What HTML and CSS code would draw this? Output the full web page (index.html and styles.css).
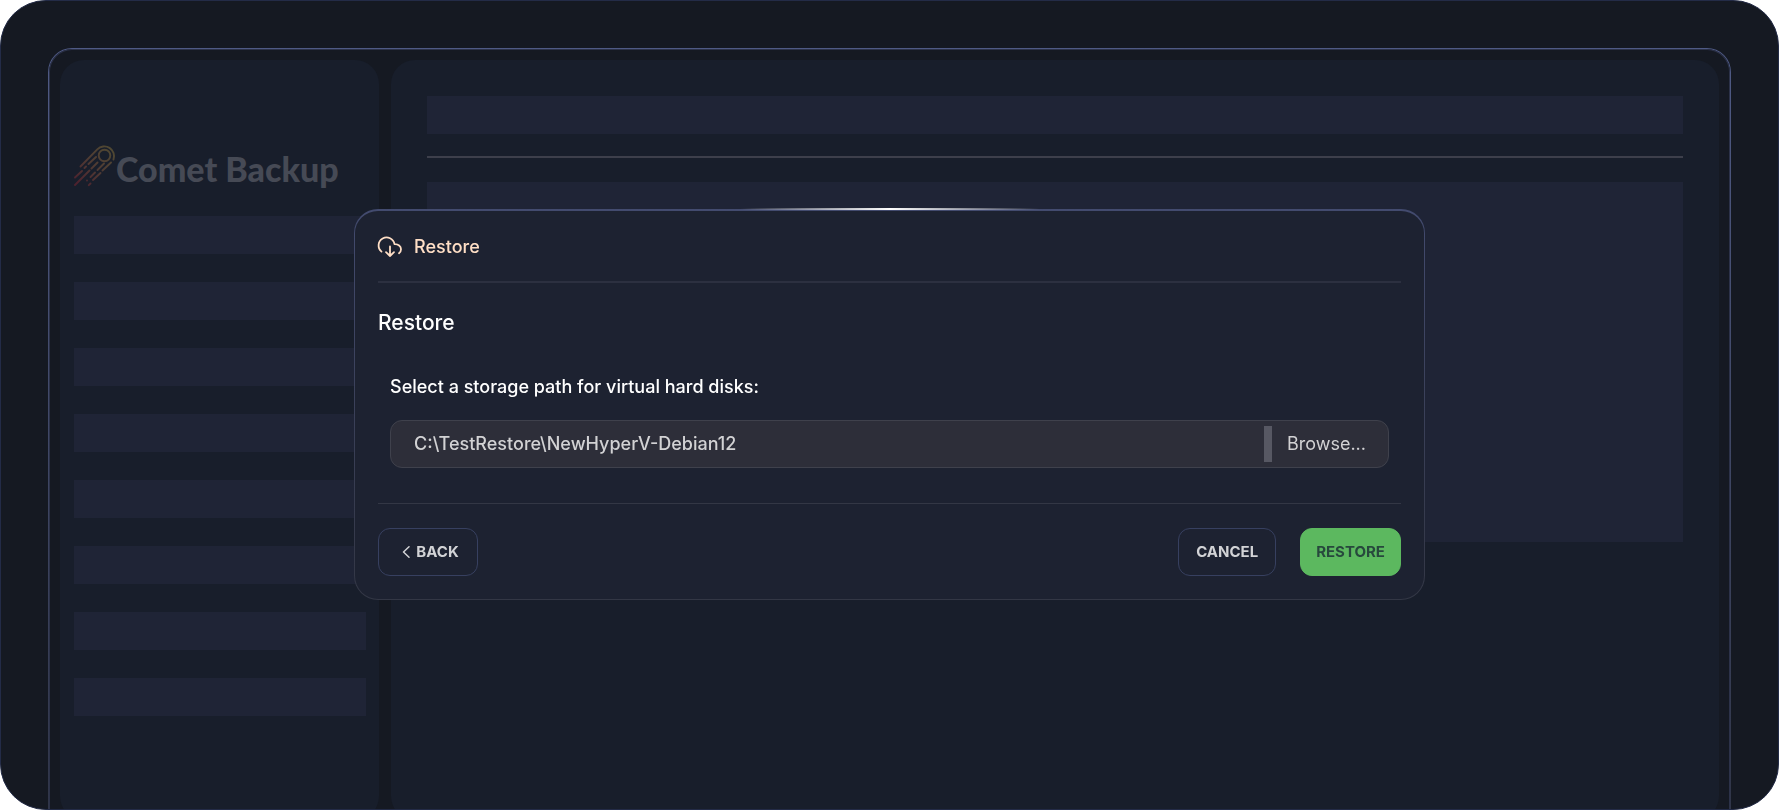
FILE: index.html
```html
<!DOCTYPE html>
<html lang="en">
<head>
<meta charset="utf-8">
<title>Comet Backup - Restore</title>
<link rel="stylesheet" href="styles.css">
</head>
<body>
<div class="stage">
  <div class="window">
    <aside class="panel sidebar">
      <div class="brand">
        <svg class="brand-mark" viewBox="0 0 42 44" fill="none" stroke="url(#comet)" stroke-width="1.9" stroke-linecap="round" aria-hidden="true">
          <defs>
            <linearGradient id="comet" gradientUnits="userSpaceOnUse" x1="36" y1="4" x2="4" y2="40">
              <stop offset="0" stop-color="#504832"/>
              <stop offset="0.5" stop-color="#4f3a33"/>
              <stop offset="1" stop-color="#4d222e"/>
            </linearGradient>
          </defs>
          <circle cx="30.500" cy="11.500" r="5.800"/>
          <path d="M6.500 22.500 23.300 5.300A9.800 9.800 0 0 1 39.500 15.500"/>
          <path d="M22 13 14.500 20M12 22.500 10.500 24M8 27 1 33.500"/>
          <path d="M23.500 18.500 17.500 24.500M15.500 26.500 1 41"/>
          <path d="M30 19.500 23.500 26M21 28.500 16.500 33M13 36.500 13 36.600"/>
          <path d="M37 18.500 28.500 26.500M26.500 29 19 36M16.500 39.500 14.800 41.200"/>
        </svg>
        <span class="brand-name">Comet Backup</span>
      </div>
      <div class="nav">
        <div class="bar"></div><div class="bar"></div><div class="bar"></div><div class="bar"></div>
        <div class="bar"></div><div class="bar"></div><div class="bar"></div><div class="bar"></div>
      </div>
    </aside>
    <main class="panel content">
      <div class="bar"></div>
      <hr class="content-rule">
      <div class="block"></div>
    </main>
  </div>
</div>
<div class="overlay">
  <form class="modal" role="dialog" aria-labelledby="dialog-title">
    <header class="modal-header">
      <svg class="cloud" viewBox="0 0 24 20" fill="none" stroke="currentColor" stroke-width="1.8" stroke-linecap="round" stroke-linejoin="round" aria-hidden="true">
        <path d="M3.500 14.600A8 8 0 1 1 16.500 7.200C20.200 7 23 9.300 23 12.300C23 14 22.300 15.400 21 16.300M12 9.500V19M8 15.200 12 19 16 15.200"/>
      </svg>
      <span id="dialog-title">Restore</span>
    </header>
    <section class="modal-body">
      <h1 class="heading">Restore</h1>
      <div class="field">
        <label class="label" for="path">Select a storage path for virtual hard disks:</label>
        <div class="path-box">
          <input class="path-input" id="path" type="text" value="C:\TestRestore\NewHyperV-Debian12">
          <button class="browse" type="button">Browse...</button>
        </div>
      </div>
    </section>
    <footer class="modal-footer">
      <button class="btn btn-back" type="button">
        <svg class="chevron" viewBox="0 0 8 12" fill="none" stroke="currentColor" stroke-width="1.5" stroke-linecap="round" stroke-linejoin="round" aria-hidden="true"><path d="M7 0.800 1.500 6 7 11.200"/></svg>
        BACK
      </button>
      <button class="btn btn-cancel" type="button">CANCEL</button>
      <button class="btn btn-primary" type="submit">RESTORE</button>
    </footer>
  </form>
</div>
</body>
</html>
```
FILE: styles.css
```css
* {
  box-sizing: border-box;
}

body {
  margin: 0;
  background: #fff;
  font-family: Inter, "Liberation Sans", sans-serif;
  color: #fff;
}

.stage {
  height: 100vh;
  padding: 47px 47px 0;
  border: 1px solid #232b47;
  border-radius: 46px;
  background: #151922;
  overflow: hidden;
}

.window {
  display: grid;
  grid-template-columns: minmax(0, 319px) minmax(0, 1fr);
  gap: 12px;
  height: calc(100% + 24px);
  padding: 11px 11px 12px;
  border: 1px solid transparent;
  border-radius: 24px 24px 0 0;
  background:
    linear-gradient(#151922, #151922) padding-box,
    linear-gradient(#4f5a85, #2f3446) border-box;
  box-shadow: inset 0 0 0 1px #2c3249;
}

.panel {
  border-radius: 24px;
  background: #181e2b;
}

.sidebar {
  padding: 84px 13px 0 14px;
}

.brand {
  display: flex;
  align-items: center;
  height: 44px;
  margin-bottom: 28px;
}

.brand-mark {
  flex: none;
  width: 42px;
  height: 44px;
}

.brand-name {
  padding-top: 5px;
  font-family: Lato, sans-serif;
  font-size: 34px;
  font-weight: 900;
  line-height: 40px;
  white-space: nowrap;
  color: #464a55;
}

.nav {
  display: grid;
  gap: 28px;
}

.bar {
  height: 38px;
  background: #1f2436;
}

.content {
  padding: 36px;
}

.content-rule {
  height: 2px;
  margin: 22px 0 24px;
  border: 0;
  background: #3d3f4b;
}

.block {
  height: 360px;
  background: #1f2436;
}

.overlay {
  position: fixed;
  inset: 0;
  display: flex;
  align-items: center;
  padding: 0 19.9% 2px;
}

.modal {
  position: relative;
  width: 100%;
  padding: 0 23px 23px;
  border: 1px solid transparent;
  border-top-width: 2px;
  border-radius: 24px;
  background:
    linear-gradient(#1d2231, #1d2231) padding-box,
    linear-gradient(#434b6f, #333745) border-box;
}

.modal::before {
  content: "";
  position: absolute;
  top: -3px;
  left: 50%;
  width: 300px;
  height: 2px;
  margin-left: -150px;
  background: linear-gradient(90deg, transparent, #fff, transparent);
}

.modal-header {
  display: flex;
  align-items: center;
  gap: 12px;
  height: 72px;
  padding-top: 2px;
  border-bottom: 2px solid #2c3040;
  font-size: 18px;
  font-weight: 500;
  line-height: 24px;
  color: #ffdfc6;
}

.cloud {
  width: 24px;
  height: 20px;
  overflow: visible;
}

.heading {
  margin: 0;
  padding: 26px 0;
  font-size: 21px;
  font-weight: 500;
  line-height: 28px;
}

.field {
  padding: 12px 12px 35px;
}

.label {
  display: block;
  margin-bottom: 21px;
  font-size: 18px;
  font-weight: 500;
  line-height: 24px;
}

.path-box {
  display: flex;
  align-items: center;
  height: 48px;
  border: 1px solid #3f414c;
  border-radius: 12px;
  background: #2d2e39;
}

.path-input {
  flex: 1;
  min-width: 0;
  height: 100%;
  padding: 0 23px;
  border: 0;
  outline: 0;
  background: none;
  font: inherit;
  font-size: 18px;
  font-weight: 500;
  color: #d2d2d4;
}

.browse {
  height: 36px;
  padding: 0 22px 0 15px;
  border: 0;
  border-left: 8px solid #575863;
  background: none;
  font: inherit;
  font-size: 18px;
  color: #d2d2d4;
}

.modal-footer {
  display: flex;
  gap: 24px;
  padding-top: 24px;
  border-top: 1px solid #333745;
}

.btn {
  display: flex;
  align-items: center;
  justify-content: center;
  gap: 6px;
  height: 48px;
  padding: 0 17px;
  border: 1px solid #374060;
  border-radius: 12px;
  background: none;
  font-family: inherit;
  font-size: 15px;
  font-weight: 700;
  color: #d2d3d6;
}

.btn-back {
  min-width: 100px;
  margin-right: auto;
  padding-left: 22px;
}

.chevron {
  width: 8px;
  height: 12px;
}

.btn-primary {
  padding: 0 15px;
  border-color: #5cb85f;
  background: #5cb85f;
  color: #27483d;
}
```
